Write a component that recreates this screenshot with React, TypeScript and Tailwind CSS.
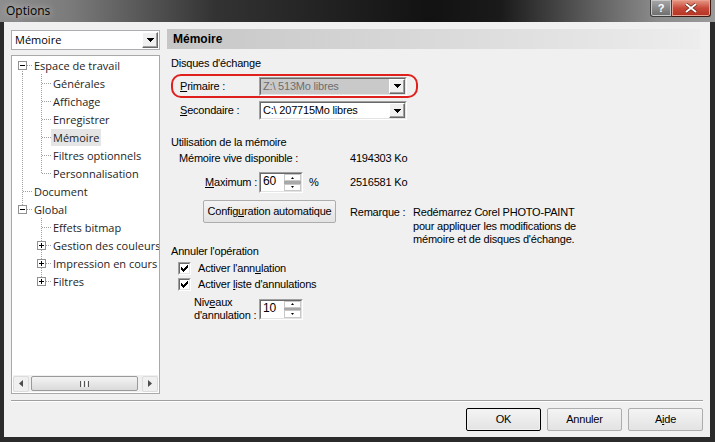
import React from 'react';

const ui = "font-['Liberation_Sans',Arial,sans-serif] text-[11px] tracking-[-0.2px] text-black";
const seg = "font-['Open_Sans','Noto_Sans',sans-serif] tracking-normal";

type Row = {
  label: string;
  level: number;
  box?: '-' | '+';
  guides: boolean[];
  last?: boolean;
  first?: boolean;
  selected?: boolean;
};

const rows: Row[] = [
  { label: 'Espace de travail', level: 0, box: '-', guides: [], first: true },
  { label: 'Générales', level: 1, guides: [true] },
  { label: 'Affichage', level: 1, guides: [true] },
  { label: 'Enregistrer', level: 1, guides: [true] },
  { label: 'Mémoire', level: 1, guides: [true], selected: true },
  { label: 'Filtres optionnels', level: 1, guides: [true] },
  { label: 'Personnalisation', level: 1, guides: [true], last: true },
  { label: 'Document', level: 0, guides: [] },
  { label: 'Global', level: 0, box: '-', guides: [], last: true },
  { label: 'Effets bitmap', level: 1, guides: [false] },
  { label: 'Gestion des couleurs', level: 1, box: '+', guides: [false] },
  { label: 'Impression en cours', level: 1, box: '+', guides: [false] },
  { label: 'Filtres', level: 1, box: '+', guides: [false], last: true },
];

const dot = { stroke: '#a0a0a0', strokeWidth: 1, strokeDasharray: '1 1' };

function TreeGuide({ row }: { row: Row }) {
  const w = 20 + 19 * row.level;
  const cx = 10.5 + 19 * row.level;
  return (
    <svg width={w} height={18} className="shrink-0" shapeRendering="crispEdges">
      {row.guides.map((g, i) =>
        g ? <line key={i} x1={10.5 + 19 * i} y1={0} x2={10.5 + 19 * i} y2={18} {...dot} /> : null
      )}
      <line x1={cx} y1={row.first ? 9 : 0} x2={cx} y2={row.last ? 10 : 18} {...dot} />
      <line x1={cx + 0.5} y1={9.5} x2={cx + 10} y2={9.5} {...dot} />
      {row.box && (
        <g>
          <rect x={cx - 4} y={5.5} width={8} height={8} fill="white" stroke="#919191" />
          <line x1={cx - 2.5} x2={cx + 2.5} y1={9.5} y2={9.5} stroke="#000" />
          {row.box === '+' && <line x1={cx} x2={cx} y1={7} y2={12} stroke="#000" />}
        </g>
      )}
    </svg>
  );
}

const Caret = ({ up = false, color = '#000' }: { up?: boolean; color?: string }) => (
  <svg width="7" height="4" viewBox="0 0 7 4" shapeRendering="crispEdges">
    <path d={up ? 'M0 4 L3.5 0 L7 4 Z' : 'M0 0 L7 0 L3.5 4 Z'} fill={color} />
  </svg>
);

const DropButton = () => (
  <div className="w-[16px] h-full flex items-center justify-center bg-[#f0f0f0] border border-t-white border-l-white border-b-[#696969] border-r-[#696969] shadow-[inset_-1px_-1px_0_#a0a0a0]">
    <Caret />
  </div>
);

function Combo({ value, disabled }: { value: string; disabled?: boolean }) {
  return (
    <div className="w-[148px] h-[19px] border border-t-[#a0a0a0] border-l-[#a0a0a0] border-b-white border-r-white">
      <div
        className={`h-full flex border border-t-[#696969] border-l-[#696969] border-b-[#e3e3e3] border-r-[#e3e3e3] ${
          disabled ? 'bg-[#c9c9c9]' : 'bg-white'
        }`}
      >
        <div className={`flex-1 pl-[2px] leading-[15px] whitespace-nowrap ${disabled ? 'text-[#6d6d6d]' : ''}`}>{value}</div>
        <DropButton />
      </div>
    </div>
  );
}

function Spin({ value }: { value: string }) {
  return (
    <div className="w-[44px] h-[21px] border border-t-[#a0a0a0] border-l-[#a0a0a0] border-b-white border-r-white">
      <div className="h-full flex bg-white border border-t-[#696969] border-l-[#696969] border-b-[#e3e3e3] border-r-[#e3e3e3]">
        <div className="flex-1 pl-[2px] pt-[1px] text-[12px] leading-[13px]">{value}</div>
        <div className="w-[17px] flex flex-col">
          <div className="h-[8px] flex items-center justify-center border border-[#c8c8c8] bg-white">
            <svg width="3" height="2"><path d="M0 2 L1.5 0 L3 2 Z" fill="#000" /></svg>
          </div>
          <div className="h-[3px] bg-[#a8a8a8]" />
          <div className="h-[8px] flex items-center justify-center border border-[#c8c8c8] bg-white">
            <svg width="3" height="2"><path d="M0 0 L3 0 L1.5 2 Z" fill="#000" /></svg>
          </div>
        </div>
      </div>
    </div>
  );
}

const Check = () => (
  <div className="w-[13px] h-[13px] shrink-0 border border-t-[#a0a0a0] border-l-[#a0a0a0] border-b-white border-r-white">
    <div className="w-full h-full bg-white border border-t-[#696969] border-l-[#696969] border-b-[#e3e3e3] border-r-[#e3e3e3] flex items-center justify-center">
      <svg width="7" height="7" viewBox="0 0 7 7" shapeRendering="crispEdges">
        <path d="M0 2 L0 5 L2 7 L7 2 L7 -1 L2 4 Z" fill="#000" />
      </svg>
    </div>
  </div>
);

function Btn({ children, def, w = 'w-[75px]' }: { children: React.ReactNode; def?: boolean; w?: string }) {
  return (
    <div
      className={`${w} h-[23px] flex items-center justify-center whitespace-nowrap rounded-[2px] bg-gradient-to-b from-[#f4f4f4] to-[#e3e3e3] ${
        def ? 'border border-black shadow-[inset_0_0_0_1px_#f0f0f0]' : 'border border-[#adadad]'
      }`}
    >
      {children}
    </div>
  );
}

export default function App() {
  return (
    <div className={`w-[715px] h-[442px] flex flex-col bg-[#2b2b2b] overflow-hidden ${ui}`}>
      {/* title bar */}
      <div className="h-[22px] shrink-0 flex bg-[linear-gradient(to_right,#8e8e8e_0%,#7a7a7a_10%,#333_30%,#121212_60%,#1a1a1a_70%,#5a5a5a_82%,#8c8c8c_92%,#9a9a9a_100%)]">
        <div className={`${seg} pl-[6px] pt-[2px] text-[12px] text-black leading-[17px] [text-shadow:0_0_6px_#dcdcdc]`}>
          Options
        </div>
        <div className="ml-auto mr-[4px] flex h-[17px]">
          <div className="w-[22px] h-[17px] rounded-bl-[3px] border border-t-0 border-[#3c3c3c] bg-gradient-to-b from-[#a8a8a8] to-[#6c6c6c] flex items-center justify-center text-white font-bold text-[11px] shadow-[inset_0_0_0_1px_#c8c8c8]">
            ?
          </div>
          <div className="w-[39px] h-[17px] rounded-br-[3px] border border-t-0 border-l-0 border-[#3c1a14] bg-gradient-to-b from-[#e59a87] via-[#c8493a] to-[#b4311f] flex items-center justify-center shadow-[inset_0_0_0_1px_#e9a090]">
            <svg width="12" height="10" viewBox="0 0 12 10">
              <path d="M1 1 L11 9 M11 1 L1 9" stroke="#5a1a10" strokeWidth="3.2" />
              <path d="M1 1 L11 9 M11 1 L1 9" stroke="#fff" strokeWidth="2" />
            </svg>
          </div>
        </div>
      </div>

      {/* client area */}
      <div className="ml-[4px] mr-[5px] mb-[5px] flex-1 bg-[#f0f0f0] flex flex-col">
        <div className="flex pl-[7px] pt-[7px] gap-[7px]">
          {/* left column */}
          <div className="w-[149px] flex flex-col">
            <div className={`${seg} h-[20px] mt-[1px] flex border border-[#abadb3] bg-white`}>
              <div className="flex-1 pl-[3px] text-[11px] leading-[17px]">Mémoire</div>
              <div className="py-[1px] pr-[1px]">
                <DropButton />
              </div>
            </div>
            <div className="mt-[5px] h-[339px] border border-[#a9a9a9] bg-white flex flex-col">
              <div className={`${seg} flex-1 overflow-hidden text-[11px] text-[#1e1e1e]`}>
                {rows.map((r) => (
                  <div key={r.label} className="flex h-[18px] items-center whitespace-nowrap">
                    <TreeGuide row={r} />
                    <span className={`px-[2px] leading-[17px] ${r.selected ? 'bg-[#e5e5e5]' : ''}`}>{r.label}</span>
                  </div>
                ))}
              </div>
              {/* horizontal scrollbar */}
              <div className="h-[17px] mx-[1px] mb-[1px] flex items-center gap-[2px] bg-[#f0f0f0]">
                <div className="w-[16px] h-[16px] flex items-center justify-center border border-[#dcdcdc] rounded-[2px]">
                  <svg width="4" height="7"><path d="M4 0 L0 3.5 L4 7 Z" fill="#4d4d4d" /></svg>
                </div>
                <div className="w-[107px] h-[15px] rounded-[2px] border border-[#9a9a9a] bg-gradient-to-b from-[#f4f4f4] to-[#dadada] flex items-center justify-center gap-[1px]">
                  <div className="w-[1px] h-[6px] bg-[#555]" />
                  <div className="w-[1px] h-[6px] bg-[#fff]" />
                  <div className="w-[1px] h-[6px] bg-[#555]" />
                  <div className="w-[1px] h-[6px] bg-[#fff]" />
                  <div className="w-[1px] h-[6px] bg-[#555]" />
                </div>
                <div className="flex-1" />
                <div className="w-[16px] h-[16px] flex items-center justify-center border border-[#dcdcdc] rounded-[2px]">
                  <svg width="4" height="7"><path d="M0 0 L4 3.5 L0 7 Z" fill="#4d4d4d" /></svg>
                </div>
              </div>
            </div>
          </div>

          {/* right panel */}
          <div className="w-[533px] flex flex-col">
            <div className="h-[20px] bg-gradient-to-r from-[#c6c6c6] to-[#ededed] pl-[6px] font-bold text-[12px] tracking-normal leading-[20px]">
              Mémoire
            </div>

            <div className="ml-[4px] mt-[8px] leading-[13px]">Disques d'échange</div>

            <div className="ml-[4px] mt-[4px] w-[247px] h-[24px] border-2 border-[#e0201c] rounded-[10px] flex items-center pl-[7px]">
              <div className="w-[79px]">
                <u>P</u>rimaire :
              </div>
              <Combo value="Z:\ 513Mo libres" disabled />
            </div>

            <div className="ml-[13px] mt-[3px] flex items-center">
              <div className="w-[79px]">
                <u>S</u>econdaire :
              </div>
              <Combo value="C:\ 207715Mo libres" />
            </div>

            <div className="ml-[4px] mt-[16px] leading-[13px]">Utilisation de la mémoire</div>

            <div className="ml-[12px] mt-[3px] flex leading-[13px]">
              <div className="w-[171px]">Mémoire vive disponible :</div>
              <div>4194303 Ko</div>
            </div>

            <div className="ml-[38px] mt-[7px] flex items-center">
              <div className="w-[54px] whitespace-nowrap">
                <u>M</u>aximum :
              </div>
              <Spin value="60" />
              <div className="w-[47px] pl-[6px]">%</div>
              <div>2516581 Ko</div>
            </div>

            <div className="ml-[36px] mt-[7px] h-[44px] flex items-start">
              <Btn w="w-[133px]">
                Config<u>u</u>ration automatique
              </Btn>
              <div className="ml-[14px] mt-[6px] w-[63px] leading-[13px]">Remarque :</div>
              <div className="mt-[6px] leading-[13.5px]">
                Redémarrez Corel PHOTO-PAINT
                <br />
                pour appliquer les modifications de
                <br />
                mémoire et de disques d'échange.
              </div>
            </div>

            <div className="ml-[4px] mt-[1px] leading-[13px]">Annuler l'opération</div>

            <div className="ml-[11px] mt-[4px] flex items-center gap-[7px] leading-[13px]">
              <Check />
              <div>
                Activer l'ann<u>u</u>lation
              </div>
            </div>
            <div className="ml-[11px] mt-[3px] flex items-center gap-[7px] leading-[13px]">
              <Check />
              <div>
                Activer <u>l</u>iste d'annulations
              </div>
            </div>

            <div className="ml-[27px] mt-[5px] flex items-center">
              <div className="w-[65px] leading-[13px] whitespace-nowrap">
                Niv<u>e</u>aux
                <br />
                d'annulation :
              </div>
              <Spin value="10" />
            </div>
          </div>
        </div>

        {/* separator */}
        <div className="mx-[7px] mt-[6px] h-[1px] bg-[#a0a0a0]" />
        <div className="mx-[7px] h-[1px] bg-white" />

        {/* buttons */}
        <div className="mt-[6px] pr-[7px] flex justify-end gap-[6px]">
          <Btn def>OK</Btn>
          <Btn>Annuler</Btn>
          <Btn>
            A<u>i</u>de
          </Btn>
        </div>
      </div>
    </div>
  );
}
